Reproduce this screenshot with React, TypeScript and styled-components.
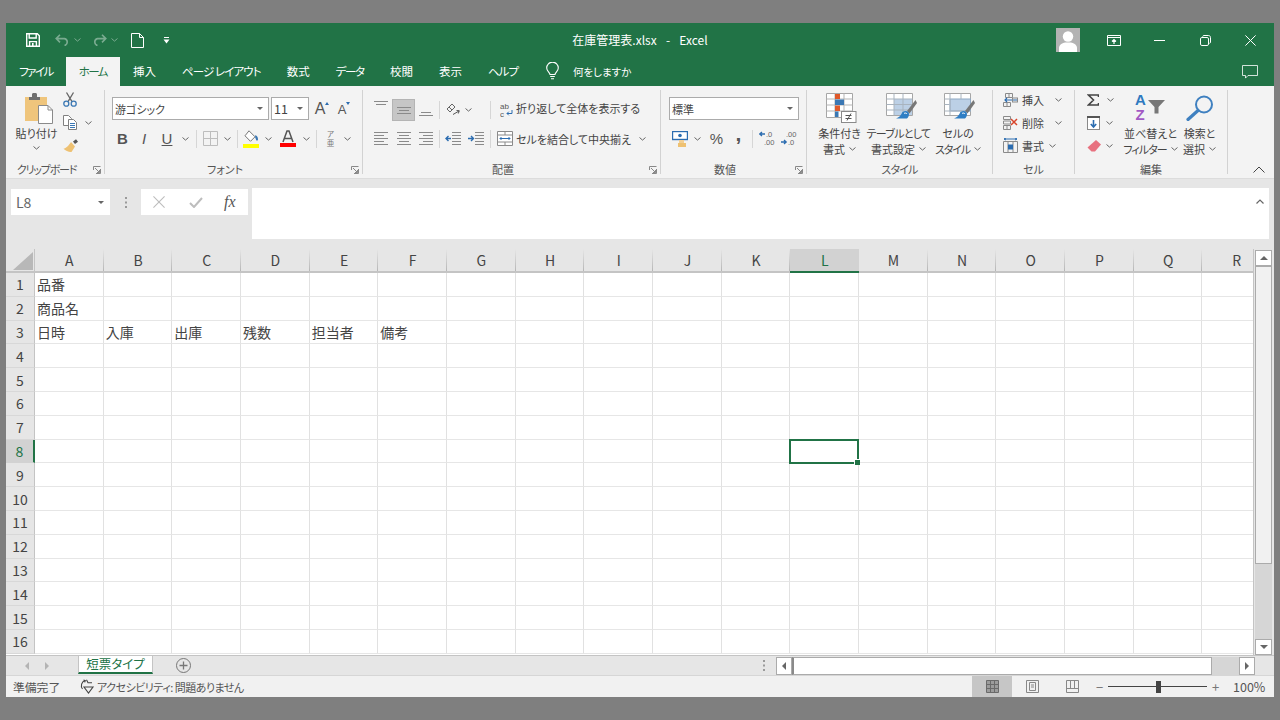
import React from "react";
import styled, { createGlobalStyle } from "styled-components";

const FONT = '"Noto Sans CJK JP", "Noto Sans", sans-serif';
const GREEN = "#217346";

const GlobalStyle = createGlobalStyle`
  html, body {
    margin: 0;
    padding: 0;
    background: #7f7f7f;
    font-family: ${FONT};
    font-feature-settings: "palt";
    color: #444;
  }
  svg { display: block; flex: none; }
`;

const Window = styled.div`
  width: 1268px;
  height: 674px;
  margin: 23px 0 0 6px;
  background: #e6e6e6;
  display: flex;
  flex-direction: column;
  overflow: hidden;
`;

/* ---------- title bar ---------- */

const TitleBar = styled.div`
  height: 34px;
  background: ${GREEN};
  display: grid;
  grid-template-columns: 1fr auto 1fr;
  align-items: center;
  color: #fff;
`;

const Qat = styled.div`
  display: flex;
  align-items: center;
  padding-left: 20px;
`;

const QatBtn = styled.div<{ $w: number; $dim?: boolean }>`
  width: ${(p) => p.$w}px;
  display: flex;
  align-items: center;
  gap: 4px;
  opacity: ${(p) => (p.$dim ? 0.4 : 1)};
`;

const Flip = styled.span`
  display: block;
  transform: scaleX(-1);
`;

const Title = styled.div`
  font-size: 12px;
  white-space: pre;
  word-spacing: 0.4px;
  color: #fff;
  padding-bottom: 2px;
`;

const WinControls = styled.div`
  display: flex;
  justify-content: flex-end;
  align-items: center;
  padding-right: 18px;
`;

const Avatar = styled.div`
  width: 24px;
  height: 24px;
  margin-right: 27px;
  background: #b3b3b3;
  overflow: hidden;
`;

const WinBtn = styled.div<{ $w: number }>`
  width: ${(p) => p.$w}px;
  display: flex;
  justify-content: flex-start;
`;

/* ---------- tabs ---------- */

const TabBar = styled.div`
  height: 29px;
  background: ${GREEN};
  display: flex;
  align-items: stretch;
  color: #fff;
`;

const Tab = styled.div<{ $active?: boolean; $ls: number }>`
  padding: 0 13px;
  font-size: 11.5px;
  line-height: 28px;
  white-space: pre;
  letter-spacing: ${(p) => p.$ls}px;
  background: ${(p) => (p.$active ? "#f3f3f3" : "transparent")};
  color: ${(p) => (p.$active ? GREEN : "#fff")};
`;

const TellMe = styled.div`
  display: flex;
  align-items: center;
  gap: 14px;
  margin-left: 15px;
  font-size: 10.5px;
  padding-bottom: 1px;
`;

const TabRight = styled.div`
  margin-left: auto;
  padding: 0 16px 0 0;
  display: flex;
  align-items: center;
`;

/* ---------- ribbon ---------- */

const Ribbon = styled.div`
  height: 92px;
  background: #f3f3f3;
  display: flex;
  box-sizing: border-box;
  flex: none;
`;

const Group = styled.div<{ $w: number }>`
  width: ${(p) => p.$w}px;
  height: 92px;
  display: flex;
  flex-direction: column;
  flex: none;
`;

const GroupBody = styled.div<{ $top?: number; $left?: number; $row?: boolean }>`
  height: 76px;
  box-sizing: border-box;
  padding: ${(p) => p.$top ?? 0}px 0 0 ${(p) => p.$left ?? 0}px;
  display: flex;
  flex-direction: ${(p) => (p.$row ? "row" : "column")};
`;

const GroupFoot = styled.div`
  height: 16px;
  display: flex;
`;

const GroupLabel = styled.div<{ $ls?: number }>`
  flex: 1;
  text-align: center;
  font-size: 11px;
  line-height: 15px;
  letter-spacing: ${(p) => p.$ls ?? 0}px;
  color: #555;
`;

const Launcher = styled.div`
  width: 17px;
  display: flex;
  justify-content: flex-end;
  align-items: center;
  padding-right: 3px;
  box-sizing: border-box;
`;

const GroupSep = styled.div`
  width: 1px;
  height: 84px;
  margin-top: 4px;
  background: #d2d2d2;
  flex: none;
`;

const Collapse = styled.div`
  flex: 1;
  display: flex;
  justify-content: flex-end;
  align-items: flex-end;
  padding: 0 9px 5px 0;
`;

const ToolRow = styled.div<{ $mt?: number }>`
  height: 23px;
  margin-top: ${(p) => p.$mt ?? 0}px;
  display: flex;
  align-items: center;
`;

const Tool = styled.div<{ $w: number; $active?: boolean; $v?: "start" | "end"; $ml?: number }>`
  width: ${(p) => p.$w}px;
  height: 22px;
  flex: none;
  box-sizing: border-box;
  margin-left: ${(p) => p.$ml ?? 0}px;
  display: flex;
  align-items: ${(p) => (p.$v === "start" ? "flex-start" : p.$v === "end" ? "flex-end" : "center")};
  justify-content: center;
  padding: ${(p) => (p.$v === "start" ? "2px 0 0" : p.$v === "end" ? "0 0 5px" : "0")};
  background: ${(p) => (p.$active ? "#c6c6c6" : "transparent")};
  border: ${(p) => (p.$active ? "1px solid #b4b4b4" : "none")};
`;

const Letter = styled.span<{ $italic?: boolean; $under?: boolean; $thin?: boolean; $size?: number; $mt?: number }>`
  font-family: "Liberation Sans", sans-serif;
  font-size: ${(p) => p.$size ?? 15}px;
  font-weight: ${(p) => (p.$italic || p.$thin ? 400 : 700)};
  font-style: ${(p) => (p.$italic ? "italic" : "normal")};
  text-decoration: ${(p) => (p.$under ? "underline" : "none")};
  margin-top: ${(p) => p.$mt ?? 0}px;
  color: #555;
`;

const SizeCaret = styled.span<{ $down?: boolean }>`
  width: 0;
  height: 0;
  margin-bottom: 10px;
  border-left: 2px solid transparent;
  border-right: 2px solid transparent;
  ${(p) => (p.$down ? "border-top: 3px solid #2b6cb0;" : "border-bottom: 3px solid #2b6cb0;")}
`;

const Phonetic = styled.span`
  display: flex;
  flex-direction: column;
  align-items: center;
  gap: 1px;
  font-size: 7.5px;
  line-height: 8px;
  color: #777;
`;

const Divider = styled.div<{ $l: number; $r: number }>`
  width: 1px;
  height: 18px;
  flex: none;
  margin: 0 ${(p) => p.$r}px 0 ${(p) => p.$l}px;
  background: #d6d6d6;
`;

const Combo = styled.div<{ $w: number; $mr?: number; $fs?: number }>`
  width: ${(p) => p.$w}px;
  height: 23px;
  margin-right: ${(p) => p.$mr ?? 0}px;
  flex: none;
  box-sizing: border-box;
  background: #fff;
  border: 1px solid #ababab;
  display: flex;
  align-items: center;
  justify-content: space-between;
  padding: 0 5px 0 2px;
  font-size: ${(p) => p.$fs ?? 11}px;
  color: #444;
`;

const CaretDown = styled.div`
  width: 0;
  height: 0;
  border-left: 3px solid transparent;
  border-right: 3px solid transparent;
  border-top: 3px solid #666;
`;

const BigBtn = styled.div<{ $w: number }>`
  width: ${(p) => p.$w}px;
  flex: none;
  display: flex;
  flex-direction: column;
  align-items: center;
`;

const BigIcon = styled.div<{ $h?: number; $pt?: number; $pl?: number }>`
  height: ${(p) => p.$h ?? 32}px;
  box-sizing: border-box;
  padding: ${(p) => p.$pt ?? 0}px 0 0 ${(p) => p.$pl ?? 0}px;
  display: flex;
  justify-content: center;
  align-items: flex-start;
`;

const BigText = styled.div<{ $ls?: number }>`
  font-size: 11px;
  line-height: 16px;
  white-space: nowrap;
  display: flex;
  align-items: center;
  gap: 4px;
  letter-spacing: ${(p) => p.$ls ?? 0}px;
  color: #444;
`;

const ChevLine = styled.div`
  height: 14px;
  display: flex;
  align-items: center;
`;

const SmallCol = styled.div<{ $w: number; $left?: number }>`
  width: ${(p) => p.$w}px;
  flex: none;
  box-sizing: border-box;
  padding: 2px 0 0 ${(p) => p.$left ?? 0}px;
`;

const ToolText = styled.span<{ $ml?: number; $up?: number }>`
  font-size: 11px;
  white-space: nowrap;
  margin-left: ${(p) => p.$ml ?? 4}px;
  margin-bottom: ${(p) => p.$up ?? 0}px;
  color: #444;
`;

const ChevBox = styled.span<{ $ml?: number }>`
  margin-left: ${(p) => p.$ml ?? 0}px;
  display: inline-flex;
`;

/* ---------- formula bar ---------- */

const FormulaBar = styled.div`
  height: 71px;
  flex: none;
  box-sizing: border-box;
  background: #e6e6e6;
  border-top: 1px solid #dcdcdc;
  padding: 9px 0 0 5px;
  display: flex;
  align-items: flex-start;
`;

const NameBox = styled.div`
  width: 99px;
  height: 26px;
  margin-top: 1px;
  box-sizing: border-box;
  background: #fff;
  display: flex;
  align-items: center;
  justify-content: space-between;
  padding: 0 6px 0 5px;
  font-size: 14px;
  color: #666;
`;

const Dots = styled.div`
  width: 31px;
  height: 26px;
  margin-top: 1px;
  display: flex;
  align-items: center;
  justify-content: center;
`;

const FxBox = styled.div`
  width: 107px;
  height: 26px;
  margin-top: 1px;
  box-sizing: border-box;
  background: #fff;
  display: flex;
  align-items: center;
  padding-left: 12px;
`;

const FxCell = styled.div`
  width: 36px;
  display: flex;
  justify-content: flex-start;
`;

const FxText = styled.span`
  font-family: "Liberation Serif", serif;
  font-style: italic;
  font-size: 16px;
  color: #555;
  margin-left: -1px;
`;

const FormulaInput = styled.div`
  width: 1017px;
  height: 51px;
  margin-left: 4px;
  background: #fff;
  display: flex;
  justify-content: flex-end;
  padding: 11px 5px 0 0;
  box-sizing: border-box;
`;

/* ---------- sheet ---------- */

const SheetArea = styled.div`
  height: 406px;
  flex: none;
  display: flex;
`;

const Sheet = styled.div`
  width: 1248px;
  flex: none;
  overflow: hidden;
  background: #fff;
  display: grid;
  grid-template-columns: 29px repeat(18, 68.68px);
  grid-template-rows: 24px repeat(16, 23.8px);
  border-right: 1px solid #c4c4c4;
  box-sizing: border-box;
`;

const Corner = styled.div`
  background: #e6e6e6;
  border-bottom: 2px solid #c4c4c4;
  border-right: 1px solid #c4c4c4;
  box-sizing: border-box;
  padding: 3px 1px 1px 7px;
  &::before {
    content: "";
    display: block;
    width: 100%;
    height: 100%;
    background: #b8b8b8;
    clip-path: polygon(100% 0, 100% 100%, 0 100%);
  }
`;

const ColHead = styled.div<{ $on?: boolean }>`
  box-sizing: border-box;
  display: flex;
  align-items: center;
  justify-content: center;
  font-size: 14px;
  color: ${(p) => (p.$on ? GREEN : "#444")};
  border-bottom: 2px solid ${(p) => (p.$on ? GREEN : "#c4c4c4")};
  background: ${(p) => (p.$on ? "#d2d2d2" : "linear-gradient(#e6e6e6, #b6b6b6) right / 1px 100% no-repeat, #e6e6e6")};
`;

const RowHead = styled.div<{ $on?: boolean }>`
  box-sizing: border-box;
  display: flex;
  align-items: center;
  justify-content: center;
  font-size: 14px;
  color: ${(p) => (p.$on ? GREEN : "#444")};
  background: ${(p) => (p.$on ? "#d2d2d2" : "#e6e6e6")};
  border-right: ${(p) => (p.$on ? `2px solid ${GREEN}` : "1px solid #c4c4c4")};
  border-bottom: 1px solid ${(p) => (p.$on ? "#d2d2d2" : "#d8d8d8")};
`;

const Cell = styled.div<{ $sel?: boolean }>`
  box-sizing: border-box;
  border-right: 1px solid #e1e1e1;
  border-bottom: 1px solid #e6e6e6;
  font-size: 14px;
  line-height: 22px;
  padding-left: 2px;
  white-space: nowrap;
  color: #444;
  position: relative;
  ${(p) =>
    p.$sel &&
    `
    z-index: 2;
    &::before {
      content: "";
      position: absolute;
      inset: -1px -1px -2px -1px;
      border: 2px solid ${GREEN};
    }
    &::after {
      content: "";
      position: absolute;
      right: -2px;
      bottom: -3px;
      width: 5px;
      height: 5px;
      background: ${GREEN};
      border: 1px solid #fff;
      border-width: 1px 0 0 1px;
    }
  `}
`;

const VScroll = styled.div`
  width: 20px;
  flex: none;
  box-sizing: border-box;
  padding: 1px 2px 0 1px;
  display: flex;
  flex-direction: column;
  background: #e6e6e6;
`;

const ScrollBtn = styled.div<{ $h?: boolean }>`
  width: ${(p) => (p.$h ? "16px" : "auto")};
  height: ${(p) => (p.$h ? "auto" : "16px")};
  flex: none;
  box-sizing: border-box;
  background: #fff;
  border: 1px solid #ababab;
  display: flex;
  align-items: center;
  justify-content: center;
`;

const VThumb = styled.div`
  height: 298px;
  flex: none;
  box-sizing: border-box;
  background: #f1f1f1;
  border: 1px solid #ababab;
`;

const Track = styled.div`
  flex: 1;
  background: #d6d6d6;
`;

const Arrow = styled.div<{ $dir: "up" | "down" | "left" | "right"; $color?: string }>`
  width: 0;
  height: 0;
  ${(p) => {
    const c = p.$color ?? "#666";
    if (p.$dir === "up") return `border-left:4px solid transparent;border-right:4px solid transparent;border-bottom:4px solid ${c};`;
    if (p.$dir === "down") return `border-left:4px solid transparent;border-right:4px solid transparent;border-top:4px solid ${c};`;
    if (p.$dir === "left") return `border-top:4px solid transparent;border-bottom:4px solid transparent;border-right:4px solid ${c};`;
    return `border-top:4px solid transparent;border-bottom:4px solid transparent;border-left:4px solid ${c};`;
  }}
`;

/* ---------- sheet tabs ---------- */

const SheetBar = styled.div`
  height: 20px;
  flex: none;
  box-sizing: border-box;
  background: #e6e6e6;
  border-top: 1px solid #c4c4c4;
  display: flex;
  align-items: stretch;
`;

const SheetNav = styled.div`
  width: 72px;
  flex: none;
  display: flex;
  align-items: center;
  gap: 16px;
  padding-left: 19px;
  box-sizing: border-box;
`;

const SheetTab = styled.div`
  width: 75px;
  height: 18px;
  flex: none;
  box-sizing: border-box;
  background: #fff;
  border-bottom: 2px solid ${GREEN};
  border-left: 1px solid #c4c4c4;
  border-right: 1px solid #c4c4c4;
  color: ${GREEN};
  font-size: 12.5px;
  line-height: 15px;
  text-align: center;
`;

const AddSheet = styled.div`
  margin-left: 23px;
  display: flex;
  align-items: center;
`;

const SheetSpacer = styled.div`
  flex: 1;
  display: flex;
  justify-content: flex-end;
  align-items: center;
  padding-right: 11px;
`;

const HScroll = styled.div`
  width: 479px;
  flex: none;
  margin-right: 19px;
  display: flex;
  padding-top: 1px;
`;

const HThumb = styled.div`
  width: 420px;
  flex: none;
  box-sizing: border-box;
  background: #fff;
  border: 1px solid #ababab;
  border-left: 2px solid #8a8a8a;
`;

/* ---------- status bar ---------- */

const StatusBar = styled.div`
  height: 22px;
  flex: none;
  box-sizing: border-box;
  background: #f1f1f1;
  border-top: 1px solid #d6d6d6;
  display: flex;
  align-items: center;
  font-size: 11px;
  color: #555;
`;

const Ready = styled.div`
  width: 74px;
  padding-left: 7px;
  box-sizing: border-box;
  font-size: 11.8px;
`;

const A11y = styled.div`
  display: flex;
  align-items: center;
  gap: 2px;
  white-space: pre;
  letter-spacing: -0.5px;
`;

const ViewBtns = styled.div`
  margin-left: auto;
  display: flex;
  align-self: stretch;
`;

const ViewBtn = styled.div<{ $active?: boolean }>`
  width: 40px;
  display: flex;
  align-items: center;
  justify-content: center;
  background: ${(p) => (p.$active ? "#c6c6c6" : "transparent")};
`;

const ZoomCtl = styled.div`
  width: 182px;
  flex: none;
  box-sizing: border-box;
  padding-left: 4px;
  display: flex;
  align-items: center;
`;

const SliderLine = styled.div<{ $w: number }>`
  width: ${(p) => p.$w}px;
  height: 1px;
  background: #444;
`;

const SliderThumb = styled.div`
  width: 5px;
  height: 12px;
  background: #444;
`;

const ZoomSign = styled.span<{ $w: number; $ml?: number }>`
  width: ${(p) => p.$w}px;
  margin-left: ${(p) => p.$ml ?? 0}px;
  font-size: 13px;
  color: #777;
  line-height: 1;
`;

const ZoomPct = styled.span`
  font-size: 12.5px;
  color: #555;
`;

/* ---------- icons ---------- */

const Chev = ({ ml, color = "#666" }: { ml?: number; color?: string }) => (
  <ChevBox $ml={ml}>
    <svg width="7" height="4" viewBox="0 0 7 4">
      <path d="M.5.5l3 2.6 3-2.6" fill="none" stroke={color} strokeWidth="1" />
    </svg>
  </ChevBox>
);

const SaveIcon = () => (
  <svg width="14" height="14" viewBox="0 0 14 14" fill="none" stroke="#fff" strokeWidth="1.4">
    <path d="M.7.7h10.6l2 2v10.600H.7z" />
    <path d="M3.200 1v4h7V1M3.600 13V8.600h6.800V13" />
    <path d="M6 10v3h1.600v-3z" fill="#fff" stroke="none" />
  </svg>
);
const UndoIcon = () => (
  <svg width="15" height="12" viewBox="0 0 15 12" fill="none" stroke="#fff" strokeWidth="1.6">
    <path d="M5 .8L1.200 4.600 5 8.400M1.500 4.600h8a3.600 3.600 0 010 7" />
  </svg>
);
const NewDocIcon = () => (
  <svg width="13" height="15" viewBox="0 0 13 15" fill="none" stroke="#fff" strokeWidth="1">
    <path d="M.5.5h8l4 4v10h-12zM8.500.5v4h4" />
  </svg>
);
const CustomizeIcon = () => (
  <svg width="7" height="7" viewBox="0 0 7 7" fill="#fff">
    <path d="M1 0h5v1H1zM.5 2.500h6L3.500 6.500z" />
  </svg>
);
const AvatarIcon = () => (
  <svg width="24" height="24" viewBox="0 0 24 24" fill="#fff">
    <circle cx="12" cy="8.500" r="5.200" />
    <path d="M3 24v-4c0-3.400 4-5 6-5.400h6c2 .4 6 2 6 5.400v4z" />
  </svg>
);
const DisplayIcon = () => (
  <svg width="14" height="11" viewBox="0 0 14 11" fill="none" stroke="#fff" strokeWidth="1">
    <path d="M.5.5h13v10H.5zM.5 2.500h13" />
    <path d="M7 9V4.500M5 6.500l2-2 2 2" strokeWidth="1.2" />
  </svg>
);
const MinIcon = () => (
  <svg width="11" height="1" viewBox="0 0 11 1"><path d="M0 0h11v1H0z" fill="#fff" /></svg>
);
const RestoreIcon = () => (
  <svg width="11" height="11" viewBox="0 0 11 11" fill="none" stroke="#fff" strokeWidth="1">
    <rect x=".5" y="2.500" width="8" height="8" rx="1.400" />
    <path d="M2.600 1.600c.2-.7.7-1.100 1.400-1.100h4.600c1 0 1.900.9 1.900 1.900V7c0 .7-.4 1.200-1 1.400" />
  </svg>
);
const CloseIcon = ({ size = 11, color = "#fff" }: { size?: number; color?: string }) => (
  <svg width={size} height={size} viewBox="0 0 11 11" stroke={color} strokeWidth="1" fill="none">
    <path d="M.4.4l10.200 10.200M10.600.4L.4 10.600" />
  </svg>
);
const BulbIcon = () => (
  <svg width="13" height="18" viewBox="0 0 13 18" fill="none" stroke="#fff" strokeWidth="1.1">
    <path d="M4 12.500c0-2-3.300-3.300-3.300-6.600a5.800 5.800 0 0111.600 0c0 3.300-3.300 4.600-3.300 6.600z" />
    <path d="M4.200 14.500h4.600M5 16.700h3" />
  </svg>
);
const CommentIcon = () => (
  <svg width="16" height="14" viewBox="0 0 16 14" fill="none" stroke="#fff" strokeOpacity=".8" strokeWidth="1">
    <path d="M.5.5h15v10H6l-2.500 2.600V10.500H.5z" />
  </svg>
);
const PasteIcon = () => (
  <svg width="28" height="31" viewBox="0 0 28 31">
    <rect x="0" y="4" width="22" height="24" fill="#efc57c" />
    <path d="M4 7V4h3V1.500C7 .6 7.600 0 8.500 0h2C11.400 0 12 .6 12 1.500V4h3v3z" fill="#6f6f6f" />
    <path d="M13.500 12.500h9.500l4.500 4.500v13.500h-14z" fill="#fff" stroke="#8a8a8a" />
    <path d="M23 12.500V17h4.500" fill="none" stroke="#8a8a8a" />
  </svg>
);
const CutIcon = () => (
  <svg width="14" height="15" viewBox="0 0 14 15" fill="none">
    <path d="M5 9.600L10.500.5M9 9.600L3.500.5" stroke="#666" strokeWidth="1.3" />
    <circle cx="3.300" cy="11.700" r="2.500" stroke="#3b78b4" strokeWidth="1.300" />
    <circle cx="10.700" cy="11.700" r="2.500" stroke="#3b78b4" strokeWidth="1.300" />
  </svg>
);
const CopyIcon = () => (
  <svg width="14" height="15" viewBox="0 0 14 15" fill="#fff" stroke="#808080" strokeWidth="1">
    <path d="M.5.5h5l3 3v7h-8z" />
    <path d="M5.500 4.500h5l3 3v7h-8z" />
    <path d="M7 8.500h5M7 10.500h5M7 12.500h5" stroke="#3b78b4" />
  </svg>
);
const PainterIcon = () => (
  <svg width="16" height="14" viewBox="0 0 16 14">
    <path d="M10 2.500l3-2.300 2 2.500-3 2.300z" fill="#555" />
    <path d="M8 3l4 4.500-3.500 5.500C6 13.300 2.500 12 .5 9.800 3 9.500 6 6 8 3z" fill="#eec172" />
  </svg>
);
const LauncherIcon = () => (
  <svg width="8" height="8" viewBox="0 0 8 8" fill="none" stroke="#888" strokeWidth="1">
    <path d="M.5 4V.5H7.500" />
    <path d="M7.500 3v4.500H3M2 2l4.500 4.500M6.500 4v2.500H4" />
  </svg>
);
const BordersIcon = () => (
  <svg width="15" height="15" viewBox="0 0 15 15" fill="none" stroke="#bdbdbd" strokeWidth="1">
    <path d="M.5.500h14v14H.5zM7.500.5v14M.5 7.500h14" />
  </svg>
);
const FillColorIcon = () => (
  <svg width="16" height="18" viewBox="0 0 16 18">
    <path d="M6 .8l6 6-4.500 4.500-5.500-5.500z" fill="#fff" stroke="#777" />
    <path d="M12.500 5c2 1 2.500 3 2.500 4.500s-2 1.500-2 0L12 7z" fill="#3b78b4" />
    <rect x="0" y="14" width="16" height="4" fill="#ffff00" />
  </svg>
);
const FontColorIcon = () => (
  <svg width="16" height="17" viewBox="0 0 16 17">
    <path d="M3 12L7 1h2l4 11M4.800 8.500h6.400" fill="none" stroke="#555" strokeWidth="1.500" />
    <rect x="0" y="13" width="16" height="4" fill="#ff0000" />
  </svg>
);
const AlignV = ({ pos }: { pos: "top" | "mid" | "bot" }) => (
  <svg width="14" height="8" viewBox="0 0 14 8" stroke="#8a8a8a" strokeWidth="1">
    {pos === "top" && <path d="M0 .5h14M2 3.500h10" />}
    {pos === "mid" && <path d="M0 1.500h14M2 4.500h10M0 7.500h14" />}
    {pos === "bot" && <path d="M2 4.500h10M0 7.500h14" />}
  </svg>
);
const AlignH = ({ pos }: { pos: "left" | "center" | "right" }) => {
  const d =
    pos === "left"
      ? "M0 .5h14M0 3.500h10M0 6.500h14M0 9.500h10M0 12.500h14"
      : pos === "center"
      ? "M0 .5h14M2 3.500h10M0 6.500h14M2 9.500h10M0 12.500h14"
      : "M0 .5h14M4 3.500h10M0 6.500h14M4 9.500h10M0 12.500h14";
  return (
    <svg width="14" height="13" viewBox="0 0 14 13" stroke="#8a8a8a" strokeWidth="1">
      <path d={d} />
    </svg>
  );
};
const OrientIcon = () => (
  <svg width="14" height="14" viewBox="0 0 14 14" fill="none" stroke="#666" strokeWidth="1">
    <path d="M1 6l5-5 3 3-5 5zM3 4l3 3" />
    <path d="M7 11.500l6-3.500M10.500 7.500l2.800.2-1 2.800" stroke="#555" />
  </svg>
);
const IndentIcon = ({ inc }: { inc?: boolean }) => (
  <svg width="16" height="13" viewBox="0 0 16 13" fill="none">
    <path d="M7 .5h9M7 3.500h9M7 6.500h9M7 9.500h9M7 12.500h9" stroke="#8a8a8a" />
    {inc ? (
      <path d="M0 6.500h5M3 4l2.500 2.500L3 9" stroke="#2b6cb0" strokeWidth="1.400" />
    ) : (
      <path d="M6 6.500H1M3.500 4L1 6.500 3.500 9" stroke="#2b6cb0" strokeWidth="1.400" />
    )}
  </svg>
);
const WrapIcon = () => (
  <svg width="13" height="16" viewBox="0 0 13 16" fill="none">
    <text x="0" y="7" fontFamily="Liberation Sans" fontSize="8" fill="#555">ab</text>
    <text x="0" y="15" fontFamily="Liberation Sans" fontSize="8" fill="#555">c</text>
    <path d="M12 8v3.500H7M8.800 9.700L7 11.500l1.800 1.800" stroke="#2b6cb0" />
  </svg>
);
const MergeIcon = () => (
  <svg width="16" height="15" viewBox="0 0 16 15" fill="#fff" stroke="#8a8a8a">
    <path d="M.5.500h15v14H.5zM.5 4h15M.5 11h15M8 .5V4M8 11v3.500" />
    <path d="M3 7.500h10M4.500 6L3 7.500 4.500 9M11.500 6L13 7.500 11.500 9" stroke="#2b6cb0" fill="none" />
  </svg>
);
const AccountingIcon = () => (
  <svg width="16" height="16" viewBox="0 0 16 16">
    <rect x=".5" y=".5" width="15" height="8" fill="#fff" stroke="#2b6cb0" strokeWidth="1.400" />
    <circle cx="8" cy="4.500" r="1.800" fill="#2b6cb0" />
    <rect x="7" y="9" width="5" height="3" fill="#f2cf93" />
    <rect x="6" y="12" width="8" height="4" fill="#eec172" />
  </svg>
);
const DecIcon = ({ inc }: { inc?: boolean }) => (
  <svg width="17" height="15" viewBox="0 0 17 15">
    <text x={inc ? 5 : 7} y="6" fontFamily="Liberation Sans" fontSize="7.5" fill="#666">{inc ? ".00" : ".0"}</text>
    <text x={inc ? 7 : 5} y="14" fontFamily="Liberation Sans" fontSize="7.5" fill="#666">{inc ? ".0" : ".00"}</text>
    {inc ? (
      <path d="M0 11h5M3 9l2.200 2L3 13" fill="none" stroke="#2b6cb0" strokeWidth="1.300" />
    ) : (
      <path d="M1 3h5M3 1L.8 3 3 5" fill="none" stroke="#2b6cb0" strokeWidth="1.300" />
    )}
  </svg>
);
const CondIcon = () => (
  <svg width="31" height="30" viewBox="0 0 31 30">
    <path d="M.5.500h26v24H.5z" fill="#fff" stroke="#a6a6a6" />
    <path d="M.5 6h26M.5 12h26M.5 18h26M9 .5v24M18 .5v24" stroke="#b5b5b5" fill="none" />
    <rect x="9" y="1" width="5" height="5" fill="#e0592a" />
    <rect x="9" y="6.500" width="9" height="5.500" fill="#3b78b4" />
    <rect x="9" y="12.500" width="5" height="5.500" fill="#e0592a" />
    <rect x="9" y="18.500" width="3.500" height="5.500" fill="#3b78b4" />
    <rect x="15.500" y="18.500" width="14.500" height="11" fill="#fff" stroke="#8a8a8a" />
    <path d="M19.500 22.500h6M19.500 25.500h6M25 20.500l-4 7" stroke="#555" fill="none" />
  </svg>
);
const TableIcon = () => (
  <svg width="31" height="30" viewBox="0 0 31 30">
    <path d="M.5.500h26v22H.5z" fill="#fff" stroke="#a6a6a6" />
    <rect x="8" y="6" width="18" height="16" fill="#bcd0e6" />
    <path d="M.5 6h26M.5 11.500h26M.5 17h26M8 .5v22M17 .5v22" stroke="#a9b4bf" fill="none" />
    <path d="M29.500 7L21 18l2.500 2.500L31 10z" fill="#777" />
    <path d="M16.500 19c3-2 6.500-1 6.500 2 0 2-1 3.500-2 4.500H10c3-1 5-3 6.500-6.500z" fill="#2f7ec4" />
    <path d="M18 20.500c1-.8 2.500-.5 3 .5" stroke="#fff" fill="none" />
  </svg>
);
const CellStyleIcon = () => (
  <svg width="31" height="30" viewBox="0 0 31 30">
    <path d="M.5.500h26v22H.5z" fill="#fff" stroke="#a6a6a6" />
    <rect x="6" y="6" width="20.500" height="12" fill="#bcd0e6" stroke="#8fa9c4" />
    <path d="M.5 6h5M.5 11.500h5M.5 18h26M6 .5V22M17 .5V6M17 18v4.500" stroke="#a9b4bf" fill="none" />
    <path d="M29.500 7L21 18l2.500 2.500L31 10z" fill="#777" />
    <path d="M16.500 19c3-2 6.500-1 6.500 2 0 2-1 3.500-2 4.500H10c3-1 5-3 6.500-6.500z" fill="#2f7ec4" />
    <path d="M18 20.500c1-.8 2.500-.5 3 .5" stroke="#fff" fill="none" />
  </svg>
);
const InsertCellsIcon = () => (
  <svg width="15" height="14" viewBox="0 0 15 14" fill="none" stroke="#8a8a8a">
    <path d="M2.500.5h7v4h-7zM6 .5v4M.5 9.500h7v4h-7zM4 9.500v4" />
    <path d="M2 7h12M4 5L2 7l2 2" stroke="#2b6cb0" strokeWidth="1.200" />
    <rect x="9.500" y="5" width="5" height="4" />
  </svg>
);
const DeleteCellsIcon = () => (
  <svg width="15" height="14" viewBox="0 0 15 14" fill="none" stroke="#8a8a8a">
    <path d="M.5.500h7v3h-7zM.5 5h7v3h-7zM.5 9.500h7v4h-7zM4 9.500v4" />
    <path d="M8 3l6 6M14 3L8 9" stroke="#d8442a" strokeWidth="1.500" />
  </svg>
);
const FormatCellsIcon = () => (
  <svg width="15" height="15" viewBox="0 0 15 15" fill="none" stroke="#8a8a8a">
    <path d="M.5 3.500h14v11H.5zM5 3.500v11M10 3.500v11" />
    <rect x="5" y="6.500" width="5" height="5" fill="#2b6cb0" stroke="none" />
    <path d="M1 1h13M3 0L1 1l2 1M12 0l2 1-2 1" stroke="#2b6cb0" />
  </svg>
);
const SigmaIcon = () => (
  <svg width="12" height="12" viewBox="0 0 12 12" fill="none" stroke="#444" strokeWidth="1.600">
    <path d="M11.500 3V1H1.500L6.500 6l-5 5h10V9" />
  </svg>
);
const FillDownIcon = () => (
  <svg width="13" height="14" viewBox="0 0 13 14">
    <rect x=".5" y=".5" width="12" height="13" fill="#fff" stroke="#8a8a8a" />
    <rect x="0" y="0" width="13" height="2" fill="#555" />
    <path d="M6.500 4v7M3.800 8l2.700 3 2.700-3" fill="none" stroke="#2b6cb0" strokeWidth="1.600" />
  </svg>
);
const EraserIcon = () => (
  <svg width="14" height="12" viewBox="0 0 14 12">
    <path d="M9 0l5 4.500-6 7H4.500L.5 7.500z" fill="#e8717f" />
  </svg>
);
const SortIcon = () => (
  <svg width="33" height="35" viewBox="-1 -4 33 35">
    <text x="0" y="12" fontFamily="Liberation Sans" fontSize="15" fontWeight="700" fill="#2e79c0">A</text>
    <text x="0.5" y="27" fontFamily="Liberation Sans" fontSize="15" fontWeight="700" fill="#a259c4">Z</text>
    <path d="M13 7h17l-6.500 7v6.500h-4V14z" fill="#777" />
  </svg>
);
const SearchIcon = () => (
  <svg width="28" height="26" viewBox="0 0 28 26" fill="none">
    <circle cx="18" cy="9.500" r="8" stroke="#3f80c0" strokeWidth="2" />
    <path d="M12 15.500L2 24.500" stroke="#3f80c0" strokeWidth="3.200" strokeLinecap="round" />
  </svg>
);
const CollapseIcon = () => (
  <svg width="12" height="7" viewBox="0 0 12 7" fill="none" stroke="#444" strokeWidth="1">
    <path d="M.5 6.500L6 1l5.500 5.500" />
  </svg>
);
const DotsIcon = () => (
  <svg width="2" height="11" viewBox="0 0 2 11" fill="#9a9a9a">
    <rect y="0" width="2" height="2" />
    <rect y="4.500" width="2" height="2" />
    <rect y="9" width="2" height="2" />
  </svg>
);
const CheckIcon = () => (
  <svg width="14" height="11" viewBox="0 0 14 11" fill="none" stroke="#bdbdbd" strokeWidth="2">
    <path d="M1 6l4 4 8-9" />
  </svg>
);
const UpChevSmall = () => (
  <svg width="8" height="5" viewBox="0 0 8 5" fill="none" stroke="#666" strokeWidth="1.200">
    <path d="M.5 4.500L4 1l3.500 3.500" />
  </svg>
);
const AddSheetIcon = () => (
  <svg width="15" height="15" viewBox="0 0 15 15" fill="none" stroke="#777">
    <circle cx="7.500" cy="7.500" r="7" />
    <path d="M7.500 3.500v8M3.500 7.500h8" strokeWidth="1.300" />
  </svg>
);
const A11yIcon = () => (
  <svg width="15" height="15" viewBox="0 0 15 15" fill="none" stroke="#444" strokeWidth="1.100">
    <path d="M5 1.500A5.500 5.500 0 002.500 10M3.500 1l1.800.6-.6 1.800" />
    <path d="M6.500.8l1.500 3h4" />
    <path d="M4 8h9l-4.500 6z" />
  </svg>
);
const GridViewIcon = () => (
  <svg width="13" height="13" viewBox="0 0 13 13" fill="#9c9c9c" stroke="#6a6a6a">
    <path d="M.5.500h12v12H.5zM4.500.5v12M8.500.5v12M.5 4.500h12M.5 8.500h12" />
  </svg>
);
const PageViewIcon = () => (
  <svg width="13" height="13" viewBox="0 0 13 13" fill="none" stroke="#888">
    <path d="M.5.500h12v12H.5zM3.500 2.500h6v8h-6zM5 5h3M5 7h3" />
  </svg>
);
const BreakViewIcon = () => (
  <svg width="13" height="13" viewBox="0 0 13 13" fill="none" stroke="#888">
    <path d="M.5.500h12v12H.5zM.5 8.500h12M4.500.5v8M8.500.5v8" />
  </svg>
);

/* ---------- data ---------- */

const COLUMNS = "ABCDEFGHIJKLMNOPQR".split("");
const ROWS = Array.from({ length: 16 }, (_, i) => i + 1);
const CELLS: Record<string, string> = {
  A1: "品番",
  A2: "商品名",
  A3: "日時",
  B3: "入庫",
  C3: "出庫",
  D3: "残数",
  E3: "担当者",
  F3: "備考",
};
const TABS = [
  { label: "ファイル", ls: -1.5 },
  { label: "ホーム", ls: -1.6 },
  { label: "挿入", ls: 0 },
  { label: "ページ レイアウト", ls: -0.9 },
  { label: "数式", ls: 0 },
  { label: "データ", ls: -1.3 },
  { label: "校閲", ls: 0 },
  { label: "表示", ls: 0 },
  { label: "ヘルプ", ls: -1 },
];

const GroupFooter = ({ label, launcher, ls }: { label: string; launcher?: boolean; ls?: number }) => (
  <GroupFoot>
    <GroupLabel $ls={ls}>{label}</GroupLabel>
    {launcher && (
      <Launcher>
        <LauncherIcon />
      </Launcher>
    )}
  </GroupFoot>
);

const App = () => {
  return (
    <>
      <GlobalStyle />
      <Window>
        <TitleBar>
          <Qat>
            <QatBtn $w={29}>
              <SaveIcon />
            </QatBtn>
            <QatBtn $w={37} $dim>
              <UndoIcon />
              <Chev color="#fff" />
            </QatBtn>
            <QatBtn $w={39} $dim>
              <Flip>
                <UndoIcon />
              </Flip>
              <Chev color="#fff" />
            </QatBtn>
            <QatBtn $w={32}>
              <NewDocIcon />
            </QatBtn>
            <QatBtn $w={10}>
              <CustomizeIcon />
            </QatBtn>
          </Qat>
          <Title>在庫管理表.xlsx   -   Excel</Title>
          <WinControls>
            <Avatar>
              <AvatarIcon />
            </Avatar>
            <WinBtn $w={47}>
              <DisplayIcon />
            </WinBtn>
            <WinBtn $w={46}>
              <MinIcon />
            </WinBtn>
            <WinBtn $w={45}>
              <RestoreIcon />
            </WinBtn>
            <WinBtn $w={11}>
              <CloseIcon />
            </WinBtn>
          </WinControls>
        </TitleBar>

        <TabBar>
          {TABS.map((t) => (
            <Tab key={t.label} $ls={t.ls} $active={t.label === "ホーム"}>
              {t.label}
            </Tab>
          ))}
          <TellMe>
            <BulbIcon />
            何をしますか
          </TellMe>
          <TabRight>
            <CommentIcon />
          </TabRight>
        </TabBar>

        <Ribbon>
          <Group $w={98}>
            <GroupBody $row $left={7}>
              <BigBtn $w={47}>
                <BigIcon $h={39} $pt={7} $pl={5}>
                  <PasteIcon />
                </BigIcon>
                <BigText>貼り付け</BigText>
                <ChevLine>
                  <Chev />
                </ChevLine>
              </BigBtn>
              <SmallCol $w={40} $left={3}>
                <ToolRow>
                  <CutIcon />
                </ToolRow>
                <ToolRow>
                  <CopyIcon />
                  <Chev ml={8} />
                </ToolRow>
                <ToolRow>
                  <PainterIcon />
                </ToolRow>
              </SmallCol>
            </GroupBody>
            <GroupFooter label="クリップボード" launcher ls={-1.2} />
          </Group>
          <GroupSep />

          <Group $w={257}>
            <GroupBody $top={11} $left={7}>
              <ToolRow>
                <Combo $w={157} $mr={2}>
                  游ゴシック
                  <CaretDown />
                </Combo>
                <Combo $w={38} $fs={12.5}>
                  11
                  <CaretDown />
                </Combo>
                <Tool $w={20} $ml={3}>
                  <Letter $thin $size={16}>A</Letter>
                  <SizeCaret />
                </Tool>
                <Tool $w={20} $ml={2}>
                  <Letter $thin $size={13} $mt={2}>A</Letter>
                  <SizeCaret $down />
                </Tool>
              </ToolRow>
              <ToolRow $mt={7}>
                <Tool $w={21}>
                  <Letter>B</Letter>
                </Tool>
                <Tool $w={22}>
                  <Letter $italic>I</Letter>
                </Tool>
                <Tool $w={24}>
                  <Letter $under $thin>U</Letter>
                </Tool>
                <Tool $w={12}>
                  <Chev />
                </Tool>
                <Divider $l={5} $r={3} />
                <Tool $w={20}>
                  <BordersIcon />
                </Tool>
                <Tool $w={14}>
                  <Chev />
                </Tool>
                <Divider $l={3} $r={2} />
                <Tool $w={22}>
                  <FillColorIcon />
                </Tool>
                <Tool $w={12}>
                  <Chev />
                </Tool>
                <Tool $w={28}>
                  <FontColorIcon />
                </Tool>
                <Tool $w={8}>
                  <Chev />
                </Tool>
                <Divider $l={6} $r={5} />
                <Tool $w={17}>
                  <Phonetic>
                    <span>ア</span>
                    <span>亜</span>
                  </Phonetic>
                </Tool>
                <Tool $w={16}>
                  <Chev />
                </Tool>
              </ToolRow>
            </GroupBody>
            <GroupFooter label="フォント" launcher />
          </Group>
          <GroupSep />

          <Group $w={297}>
            <GroupBody $top={12} $left={7}>
              <ToolRow>
                <Tool $w={22} $v="start">
                  <AlignV pos="top" />
                </Tool>
                <Tool $w={23} $active>
                  <AlignV pos="mid" />
                </Tool>
                <Tool $w={22} $v="end">
                  <AlignV pos="bot" />
                </Tool>
                <Divider $l={2} $r={1} />
                <Tool $w={24}>
                  <OrientIcon />
                </Tool>
                <Tool $w={6}>
                  <Chev />
                </Tool>
                <Divider $l={19} $r={9} />
                <WrapIcon />
                <ToolText $ml={3} $up={3}>折り返して全体を表示する</ToolText>
              </ToolRow>
              <ToolRow $mt={6}>
                <Tool $w={22}>
                  <AlignH pos="left" />
                </Tool>
                <Tool $w={23}>
                  <AlignH pos="center" />
                </Tool>
                <Tool $w={22}>
                  <AlignH pos="right" />
                </Tool>
                <Divider $l={2} $r={1} />
                <Tool $w={24}>
                  <IndentIcon />
                </Tool>
                <Tool $w={21}>
                  <IndentIcon inc />
                </Tool>
                <Divider $l={4} $r={6} />
                <MergeIcon />
                <ToolText $ml={3}>セルを結合して中央揃え</ToolText>
                <Chev ml={8} />
              </ToolRow>
            </GroupBody>
            <GroupFooter label="配置" launcher />
          </Group>
          <GroupSep />

          <Group $w={145}>
            <GroupBody $top={11} $left={8}>
              <ToolRow>
                <Combo $w={130}>
                  標準
                  <CaretDown />
                </Combo>
              </ToolRow>
              <ToolRow $mt={7}>
                <Tool $w={22}>
                  <AccountingIcon />
                </Tool>
                <Tool $w={12}>
                  <Chev />
                </Tool>
                <Tool $w={27}>
                  <Letter $thin $size={15}>%</Letter>
                </Tool>
                <Tool $w={17}>
                  <Letter $size={21} $mt={-9}>,</Letter>
                </Tool>
                <Divider $l={5} $r={3} />
                <Tool $w={22}>
                  <DecIcon />
                </Tool>
                <Tool $w={23}>
                  <DecIcon inc />
                </Tool>
              </ToolRow>
            </GroupBody>
            <GroupFooter label="数値" launcher />
          </Group>
          <GroupSep />

          <Group $w={185}>
            <GroupBody $row $top={7} $left={5}>
              <BigBtn $w={55}>
                <BigIcon $pl={4}>
                  <CondIcon />
                </BigIcon>
                <BigText>条件付き</BigText>
                <BigText>
                  書式
                  <Chev />
                </BigText>
              </BigBtn>
              <BigBtn $w={63}>
                <BigIcon $pl={5}>
                  <TableIcon />
                </BigIcon>
                <BigText $ls={-0.7}>テーブルとして</BigText>
                <BigText>
                  書式設定
                  <Chev />
                </BigText>
              </BigBtn>
              <BigBtn $w={56}>
                <BigIcon $pl={3}>
                  <CellStyleIcon />
                </BigIcon>
                <BigText>セルの</BigText>
                <BigText $ls={-1.2}>
                  スタイル
                  <Chev />
                </BigText>
              </BigBtn>
            </GroupBody>
            <GroupFooter label="スタイル" ls={-0.8} />
          </Group>
          <GroupSep />

          <Group $w={81}>
            <GroupBody>
              <SmallCol $w={81} $left={10}>
                <ToolRow>
                  <InsertCellsIcon />
                  <ToolText>挿入</ToolText>
                  <Chev ml={11} />
                </ToolRow>
                <ToolRow>
                  <DeleteCellsIcon />
                  <ToolText>削除</ToolText>
                  <Chev ml={11} />
                </ToolRow>
                <ToolRow>
                  <FormatCellsIcon />
                  <ToolText>書式</ToolText>
                  <Chev ml={5} />
                </ToolRow>
              </SmallCol>
            </GroupBody>
            <GroupFooter label="セル" />
          </Group>
          <GroupSep />

          <Group $w={152}>
            <GroupBody $row>
              <SmallCol $w={47} $left={12}>
                <ToolRow>
                  <SigmaIcon />
                  <Chev ml={8} />
                </ToolRow>
                <ToolRow>
                  <FillDownIcon />
                  <Chev ml={6} />
                </ToolRow>
                <ToolRow>
                  <EraserIcon />
                  <Chev ml={5} />
                </ToolRow>
              </SmallCol>
              <BigBtn $w={57}>
                <BigIcon $h={39} $pt={3}>
                  <SortIcon />
                </BigIcon>
                <BigText>並べ替えと</BigText>
                <BigText $ls={-1}>
                  フィルター
                  <Chev />
                </BigText>
              </BigBtn>
              <BigBtn $w={41}>
                <BigIcon $h={39} $pt={9}>
                  <SearchIcon />
                </BigIcon>
                <BigText>検索と</BigText>
                <BigText>
                  選択
                  <Chev />
                </BigText>
              </BigBtn>
            </GroupBody>
            <GroupFooter label="編集" />
          </Group>
          <GroupSep />
          <Collapse>
            <CollapseIcon />
          </Collapse>
        </Ribbon>

        <FormulaBar>
          <NameBox>
            L8
            <CaretDown />
          </NameBox>
          <Dots>
            <DotsIcon />
          </Dots>
          <FxBox>
            <FxCell>
              <CloseIcon size={12} color="#bdbdbd" />
            </FxCell>
            <FxCell>
              <CheckIcon />
            </FxCell>
            <FxText>fx</FxText>
          </FxBox>
          <FormulaInput>
            <UpChevSmall />
          </FormulaInput>
        </FormulaBar>

        <SheetArea>
          <Sheet>
            <Corner />
            {COLUMNS.map((c) => (
              <ColHead key={c} $on={c === "L"}>
                {c}
              </ColHead>
            ))}
            {ROWS.map((r) => (
              <React.Fragment key={r}>
                <RowHead $on={r === 8}>{r}</RowHead>
                {COLUMNS.map((c) => (
                  <Cell key={c} $sel={c === "L" && r === 8}>
                    {CELLS[`${c}${r}`]}
                  </Cell>
                ))}
              </React.Fragment>
            ))}
          </Sheet>
          <VScroll>
            <ScrollBtn>
              <Arrow $dir="up" />
            </ScrollBtn>
            <VThumb />
            <Track />
            <ScrollBtn>
              <Arrow $dir="down" />
            </ScrollBtn>
          </VScroll>
        </SheetArea>

        <SheetBar>
          <SheetNav>
            <Arrow $dir="left" $color="#b4b4b4" />
            <Arrow $dir="right" $color="#b4b4b4" />
          </SheetNav>
          <SheetTab>短票タイプ</SheetTab>
          <AddSheet>
            <AddSheetIcon />
          </AddSheet>
          <SheetSpacer>
            <DotsIcon />
          </SheetSpacer>
          <HScroll>
            <ScrollBtn $h>
              <Arrow $dir="left" />
            </ScrollBtn>
            <HThumb />
            <Track />
            <ScrollBtn $h>
              <Arrow $dir="right" />
            </ScrollBtn>
          </HScroll>
        </SheetBar>

        <StatusBar>
          <Ready>準備完了</Ready>
          <A11y>
            <A11yIcon />
            アクセシビリティ: 問題ありません
          </A11y>
          <ViewBtns>
            <ViewBtn $active>
              <GridViewIcon />
            </ViewBtn>
            <ViewBtn>
              <PageViewIcon />
            </ViewBtn>
            <ViewBtn>
              <BreakViewIcon />
            </ViewBtn>
          </ViewBtns>
          <ZoomCtl>
            <ZoomSign $w={12}>−</ZoomSign>
            <SliderLine $w={48} />
            <SliderThumb />
            <SliderLine $w={46} />
            <ZoomSign $w={21} $ml={5}>+</ZoomSign>
            <ZoomPct>100%</ZoomPct>
          </ZoomCtl>
        </StatusBar>
      </Window>
    </>
  );
};

export default App;
